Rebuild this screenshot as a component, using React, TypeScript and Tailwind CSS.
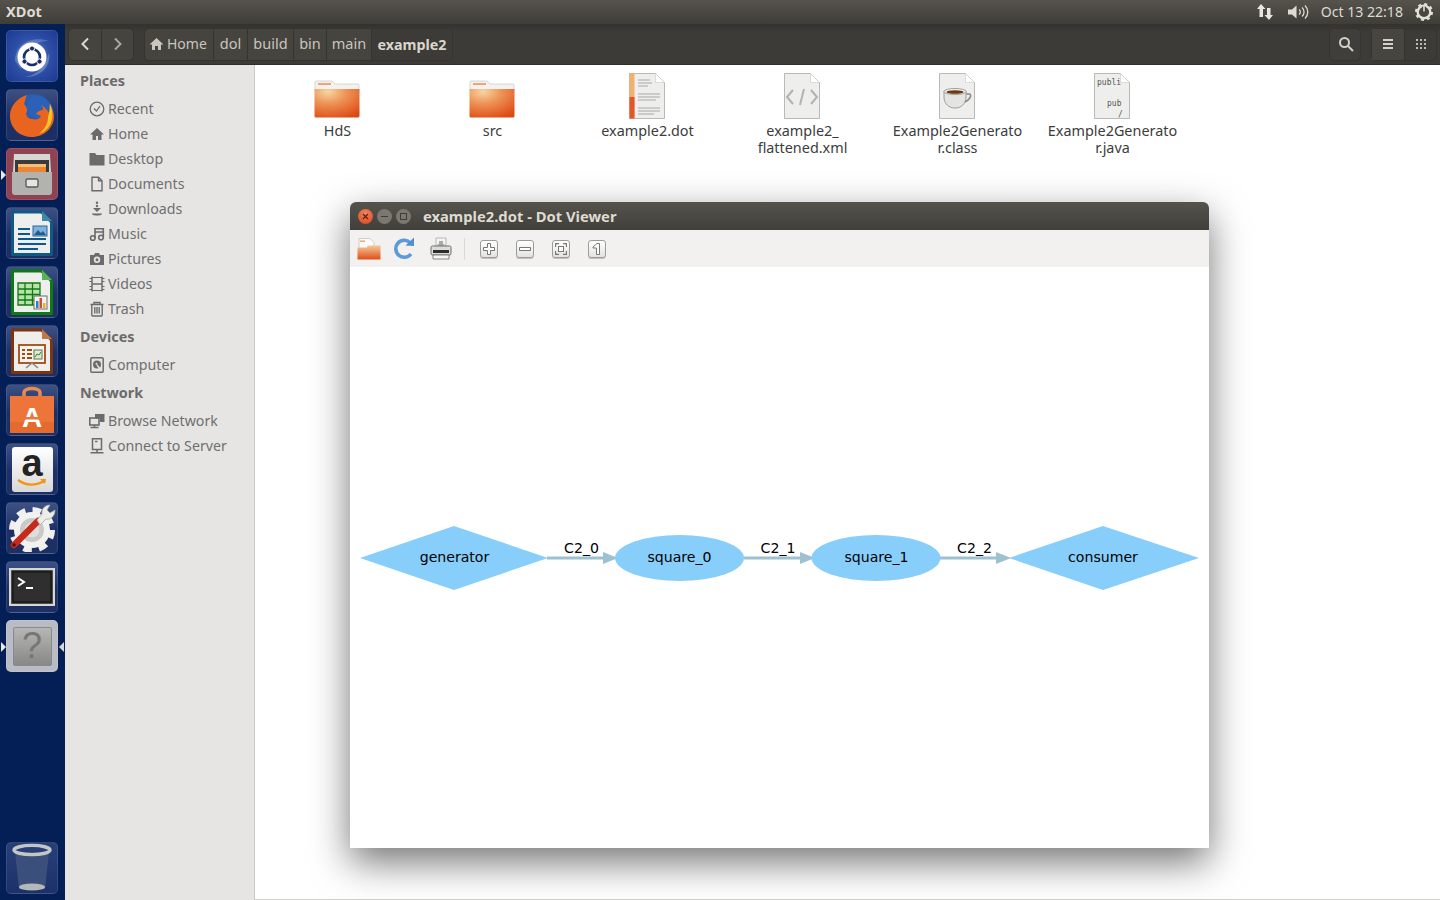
import type { ReactNode } from 'react';

const places = [
  { label: 'Recent', icon: 'recent' },
  { label: 'Home', icon: 'home' },
  { label: 'Desktop', icon: 'desktop' },
  { label: 'Documents', icon: 'documents' },
  { label: 'Downloads', icon: 'downloads' },
  { label: 'Music', icon: 'music' },
  { label: 'Pictures', icon: 'pictures' },
  { label: 'Videos', icon: 'videos' },
  { label: 'Trash', icon: 'trash' },
];

const crumbs = [
  { label: 'dol', width: 'w-[34px]' },
  { label: 'build', width: 'w-[46px]' },
  { label: 'bin', width: 'w-[33px]' },
  { label: 'main', width: 'w-[45px]' },
];

function SideIcon({ name }: { name: string }) {
  const c = '#6b6b6b';
  return (
    <svg width="16" height="16" viewBox="0 0 16 16" className="shrink-0">
      {name === 'recent' && (
        <g fill="none" stroke={c} strokeWidth="1.3">
          <circle cx="8" cy="8" r="6.8" />
          <path d="M5 7.5 7.5 10 11 5" />
        </g>
      )}
      {name === 'home' && <path d="M8 2 1 8.500H3.500V14H7v-4h2v4h3.500V8.500H15z" fill={c} />}
      {name === 'desktop' && <path d="M.5 2h5.500l1.500 2H15.500v10.500H.5z" fill={c} stroke="none" />}
      {name === 'documents' && <path d="M3 1.200h6.500l3.500 3.500v10.100H3zM9.500 1.200v3.500H13" fill="none" stroke={c} strokeWidth="1.400" />}
      {name === 'downloads' && (
        <g fill={c}>
          <circle cx="8" cy="1.800" r="1.200" />
          <circle cx="8" cy="5" r="1.200" />
          <path d="M4 7h8L8 11z" />
          <path d="M3 12.600h10c0 1-1 2-5 2s-5-1-5-2z" />
        </g>
      )}
      {name === 'music' && (
        <g fill="none" stroke={c} strokeWidth="1.600">
          <circle cx="3.800" cy="12" r="2.300" />
          <circle cx="12" cy="11.500" r="2.300" />
          <path d="M6 12V2.800h8.300v8.700M6 6h8.300" />
        </g>
      )}
      {name === 'pictures' && (
        <path
          fillRule="evenodd"
          d="M1 4H5l1-2h4l1 2h4v10H1zM8 5.500a3.200 3.200 0 1 0 0 6.400 3.200 3.200 0 0 0 0-6.400zM8 7.200a1.500 1.500 0 1 1 0 3 1.500 1.500 0 0 1 0-3z"
          fill={c}
        />
      )}
      {name === 'videos' && (
        <g fill="none" stroke={c} strokeWidth="1.500">
          <path d="M3 .5v15M13 .5v15M3 8h10" />
          <path d="M.5 2.500H3M.5 5.500H3M.5 10.500H3M.5 13.500H3M13 2.500h2.500M13 5.500h2.500M13 10.500h2.500M13 13.500h2.500" strokeWidth="1.100" />
          <path d="M3 1.500h10M3 14.500h10" strokeWidth="1.100" />
        </g>
      )}
      {name === 'trash' && (
        <g fill="none" stroke={c} strokeWidth="1.400">
          <path d="M1.500 3.500h13M5 3.500V1.500h6v2M2.800 3.500v10.500a1 1 0 0 0 1 1h8.400a1 1 0 0 0 1-1V3.500M5.800 6v6.500M8 6v6.500M10.200 6v6.500" />
        </g>
      )}
      {name === 'computer' && (
        <g>
          <rect x="1.800" y=".8" width="12.400" height="14.400" rx="1" fill="none" stroke={c} strokeWidth="1.500" />
          <circle cx="8" cy="7.500" r="4" fill={c} />
          <circle cx="7.500" cy="6.800" r="1" fill="#e6e5e4" />
          <path d="M8 8 11.500 12.500" stroke="#e6e5e4" strokeWidth="1.300" />
        </g>
      )}
      {name === 'network' && (
        <g>
          <path d="M6 1h9.500v8H11V5.500H6z" fill={c} />
          <rect x=".8" y="5" width="9.200" height="7" fill="none" stroke={c} strokeWidth="1.600" />
          <path d="M1.500 14.500h8M5.500 12v2.500" stroke={c} strokeWidth="1.500" />
        </g>
      )}
      {name === 'server' && (
        <g fill="none" stroke={c} strokeWidth="1.500">
          <path d="M3.500 .8h9v10.700h-9zM8 11.500v2.500M1.500 14.700h13" />
          <path d="M6 3.500h2.500" />
        </g>
      )}
    </svg>
  );
}

function SideRow({ icon, label }: { icon: string; label: string }) {
  return (
    <div className="flex h-[25px] items-center gap-[3px] pl-[24px] text-[14.2px] text-[#6f6f6f]">
      <SideIcon name={icon} />
      <span>{label}</span>
    </div>
  );
}

function SideHeading({ children }: { children: ReactNode }) {
  return <div className="flex h-[31px] items-center pl-[15px] text-[14.4px] font-bold text-[#6b6b6b]">{children}</div>;
}

function Tile({ children, bg, pipLeft, pipRight }: { children: ReactNode; bg: string; pipLeft?: boolean; pipRight?: boolean }) {
  return (
    <div className={`relative flex h-[52px] w-[52px] items-center justify-center overflow-visible rounded-[5px] border border-white/10 ${bg}`}>
      {pipLeft && <div className="absolute left-[-6px] top-[21px] h-0 w-0 border-y-[5px] border-l-[5px] border-y-transparent border-l-[#e8e8e8]" />}
      {pipRight && <div className="absolute right-[-7px] top-[21px] h-0 w-0 border-y-[5px] border-r-[5px] border-y-transparent border-r-[#d5d8de]" />}
      {children}
    </div>
  );
}

function Launcher() {
  const dark = 'bg-[linear-gradient(180deg,#3d5184_0%,#1c3068_55%,#1d2f63_100%)]';
  return (
    <div className="flex w-[65px] shrink-0 flex-col items-center gap-[7px] bg-[#031f56] pb-[6px] pr-[1px] pt-[6px]">
      <Tile bg="bg-[radial-gradient(circle_at_50%_50%,#7d94c8_0%,#2f50a8_50%,#1c3a90_100%)]">
        <svg width="50" height="50" viewBox="0 0 50 50">
          <path d="M8 30C8 14 24 4 42 10 30 10 16 16 14 38z" fill="#ffffff" opacity=".2" />
          <path d="M42 22c2 14-8 24-24 24 12-2 20-10 24-24z" fill="#ffffff" opacity=".25" />
          <circle cx="25" cy="26" r="14.500" fill="#ffffff" />
          <circle cx="25" cy="26" r="8" fill="none" stroke="#1b2d6b" strokeWidth="2.600" />
          <circle cx="25" cy="17.500" r="2.600" fill="#1b2d6b" stroke="#fff" />
          <circle cx="17.500" cy="30.500" r="2.600" fill="#1b2d6b" stroke="#fff" />
          <circle cx="32.500" cy="30.500" r="2.600" fill="#1b2d6b" stroke="#fff" />
        </svg>
      </Tile>
      <Tile bg={dark}>
        <svg width="50" height="50" viewBox="0 0 50 50">
          <circle cx="26" cy="25" r="21" fill="#2a5fb0" />
          <circle cx="31" cy="17" r="11" fill="#2b62b8" />
          <path d="M20 5C9 8 2 18 3 28c1 11 10 19 22 19 12 0 21-9 22-19 0-5-2-11-5-14 1 4 1 7 0 9-2-3-4-6-8-8 2 2 2 3 2 5-3 0-6 2-7 4l5 2c-1 3-5 4-9 3-3 0-5-2-6-5 2-4 1-7-2-10 1-2 1-5 3-9z" fill="#e8641f" />
          <path d="M43 14c4 8 3 19-3 25-2 2-5 4-8 5 6-5 9-11 9-17 1-3 2-9 2-13z" fill="#f6c324" />
        </svg>
      </Tile>
      <Tile bg="bg-[#8f4254]" pipLeft>
        <svg width="44" height="46" viewBox="0 0 44 46">
          <path d="M4 3h36l1 19H3z" fill="#d6d6d2" />
          <rect x="5" y="9" width="34" height="14" fill="#3a3a38" />
          <rect x="8" y="13" width="28" height="3" fill="#f4c079" />
          <rect x="8" y="16" width="28" height="5" fill="#ec8434" />
          <path d="M2 21h40v20a3 3 0 0 1-3 3H5a3 3 0 0 1-3-3z" fill="#b2b2ae" />
          <rect x="16" y="28" width="12" height="8" rx="1.500" fill="#e4e4e2" stroke="#5c5c58" strokeWidth="1.400" />
        </svg>
      </Tile>
      <Tile bg={dark}>
        <svg width="44" height="46" viewBox="0 0 44 46">
          <path d="M2.500 2h29l10 10v32.500h-39z" fill="#eeeeec" stroke="#0f5a84" strokeWidth="3" strokeLinejoin="round" />
          <path d="M32 1l10 10H32z" fill="#3d88a8" />
          <path d="M8 19h12M8 24h12M8 29h28M8 34h28M8 39h20" stroke="#0c5a8c" strokeWidth="2.200" />
          <rect x="23" y="16" width="14" height="10" fill="#7fb2dc" stroke="#2a6a98" />
          <path d="M24 25l4-5 3 3 2-2 3 4z" fill="#1f5f8f" />
        </svg>
      </Tile>
      <Tile bg={dark}>
        <svg width="44" height="46" viewBox="0 0 44 46">
          <path d="M2.500 2h29l10 10v32.500h-39z" fill="#eeeeec" stroke="#0f7a14" strokeWidth="3" strokeLinejoin="round" />
          <path d="M32 1l10 10H32z" fill="#5cb05c" />
          <path d="M8 14h22v22H8zM8 20h22M8 25.500h22M8 31h22M15 14v22M22.500 14v22" fill="#b8e2a8" stroke="#0f7a14" strokeWidth="1.300" />
          <rect x="24" y="27" width="13" height="13" fill="#f3f3f1" stroke="#6f6f6f" />
          <path d="M26 32h2.500v7H26z" fill="#2a7fd0" />
          <path d="M29.500 29h2.500v10h-2.500z" fill="#d84a2a" />
          <path d="M33 34h2.500v5H33z" fill="#eeb020" />
        </svg>
      </Tile>
      <Tile bg={dark}>
        <svg width="44" height="46" viewBox="0 0 44 46">
          <path d="M2.500 2h29l10 10v32.500h-39z" fill="#eeeeec" stroke="#7c350e" strokeWidth="3" strokeLinejoin="round" />
          <path d="M32 1l10 10H32z" fill="#bb7a50" />
          <rect x="9" y="17" width="26" height="18" fill="#f7f3ee" stroke="#a44a14" strokeWidth="1.800" />
          <path d="M12 22h3M12 26h3M12 30h3M17 22h5M17 26h5M17 30h5" stroke="#a44a14" strokeWidth="2" />
          <rect x="24" y="22" width="8" height="9" fill="#dfe8d4" stroke="#5a7a4a" />
          <path d="M25 29l2-3 2 1 2-3" stroke="#2a8a2a" fill="none" />
          <path d="M16 40l6-5 6 5" stroke="#8a8a86" fill="none" strokeWidth="1.600" />
        </svg>
      </Tile>
      <Tile bg={dark}>
        <svg width="46" height="48" viewBox="0 0 46 48">
          <path d="M15 14V7c0-6 16-6 16 0v7" fill="none" stroke="#e98a52" strokeWidth="3.500" />
          <path d="M1 10h44v37H1z" fill="#ed7539" />
          <path d="M1 36h44v11H1z" fill="#e56a2d" />
          <text x="23" y="41" textAnchor="middle" fontFamily="'Liberation Sans', sans-serif" fontWeight="700" fontSize="28" fill="#ffffff">A</text>
          <path d="M13 31h20v2.500H13z" fill="#ed7539" />
        </svg>
      </Tile>
      <Tile bg={dark}>
        <div className="flex h-[45px] w-[41px] flex-col items-center justify-start rounded-[3px] bg-[linear-gradient(180deg,#ffffff,#d8d8d8)]">
          <span className="mt-[-3px] font-['Liberation_Sans',sans-serif] text-[38px] font-bold leading-[38px] text-[#222222]">a</span>
          <svg width="32" height="8" viewBox="0 0 32 8" className="mt-[-3px]">
            <path d="M2 1c8 6 18 6 26 1" fill="none" stroke="#f2960f" strokeWidth="2.200" />
            <path d="M24 0h6l-1 5z" fill="#f2960f" />
          </svg>
        </div>
      </Tile>
      <Tile bg={dark}>
        <svg width="48" height="48" viewBox="0 0 48 48">
          <circle cx="24" cy="26" r="20" fill="none" stroke="#efefed" strokeWidth="6" strokeDasharray="8.500 7.200" />
          <circle cx="24" cy="26" r="18" fill="#f2f2f0" />
          <circle cx="24" cy="26" r="12" fill="#c9c9c6" />
          <circle cx="24" cy="26" r="7.500" fill="#dededb" />
          <path d="M6 41 30 17" stroke="#c9281c" strokeWidth="6.500" strokeLinecap="round" />
          <circle cx="6" cy="41" r="1.800" fill="#5c0e08" />
          <path d="M29 16l5-6c-1-5 3-9 8-9l-3 5 3 3 5-3c0 6-4 10-9 9l-6 6z" fill="#ecece9" stroke="#a8a8a4" strokeWidth=".8" />
        </svg>
      </Tile>
      <Tile bg={dark}>
        <svg width="46" height="38" viewBox="0 0 46 38">
          <rect x="1" y="1" width="44" height="36" fill="#2b2b2b" stroke="#d6d6d4" strokeWidth="2.400" />
          <rect x="4" y="4" width="38" height="30" fill="#2f2f2f" stroke="#101010" />
          <path d="M9 10l6 4-6 4" fill="none" stroke="#ffffff" strokeWidth="2" />
          <path d="M17 20h7" stroke="#ffffff" strokeWidth="2" />
        </svg>
      </Tile>
      <Tile bg="bg-[#b9bcc4]" pipLeft pipRight>
        <div className="flex h-[39px] w-[39px] items-center justify-center rounded-[2px] border border-[#8a8a88] bg-[linear-gradient(180deg,#b6b6b4,#888886)] font-['Liberation_Sans',sans-serif] text-[36px] leading-none text-[#777775]">
          ?
        </div>
      </Tile>
      <div className="mt-auto">
        <Tile bg="bg-[linear-gradient(180deg,#28407a_0%,#1b3168_100%)]">
          <svg width="40" height="50" viewBox="0 0 40 50">
            <path d="M3 9l4 37h26l4-37z" fill="#3b4f7c" />
            <ellipse cx="20" cy="44" rx="13" ry="3.600" fill="#b5b8ba" />
            <ellipse cx="20" cy="7" rx="18" ry="4.600" fill="none" stroke="#c4c6c6" strokeWidth="3.400" />
          </svg>
        </Tile>
      </div>
    </div>
  );
}

function FolderIcon() {
  return (
    <svg width="46" height="46" viewBox="0 0 46 46">
      <defs>
        <radialGradient id="folderFill" cx="0.3" cy="0.1" r="1">
          <stop offset="0" stopColor="#f5d6a4" />
          <stop offset="0.4" stopColor="#ee9558" />
          <stop offset="1" stopColor="#de4a15" />
        </radialGradient>
      </defs>
      <path d="M1 9a1 1 0 0 1 1-1h16l3 3h23a1 1 0 0 1 1 1v6H1z" fill="#f3f2f0" stroke="#c8c8c6" strokeWidth=".7" />
      <rect x="4" y="10" width="13" height="2" fill="#f0a478" />
      <path d="M.5 16h45v27a1.500 1.500 0 0 1-1.500 1.500H2A1.500 1.500 0 0 1 .5 43z" fill="url(#folderFill)" />
    </svg>
  );
}

function PageIcon({ children }: { children?: ReactNode }) {
  return (
    <svg width="46" height="46" viewBox="0 0 46 46">
      <path d="M5.500 .5h26l9 9v36h-35z" fill="#eeeeec" stroke="#b9b9b7" />
      <path d="M31.500 .5v9h9z" fill="#ffffff" stroke="#c8c8c6" strokeWidth=".6" />
      {children}
    </svg>
  );
}

function FileItem({ icon, lines }: { icon: ReactNode; lines: string[] }) {
  return (
    <div className="flex w-[155px] flex-col items-center">
      <div className="ml-[-2px] h-[46px] w-[46px]">{icon}</div>
      <div className="mt-[3px] text-center text-[14.4px] leading-[17px] text-[#3c3c3c]">
        {lines.map((line) => (
          <div key={line}>{line}</div>
        ))}
      </div>
    </div>
  );
}

function ToolButton({ children }: { children: ReactNode }) {
  return (
    <div className="flex h-[18px] w-[18px] items-center justify-center rounded-[3px] border border-[#9c9c9a] bg-[linear-gradient(180deg,#ffffff,#e2e2e0)] shadow-[0_1px_0_rgba(0,0,0,0.2)]">
      <svg width="12" height="12" viewBox="0 0 12 12" fill="#ffffff" stroke="#777775">
        {children}
      </svg>
    </div>
  );
}

function DotViewer() {
  return (
    <div className="absolute left-[350px] top-[202px] flex h-[646px] w-[859px] flex-col overflow-hidden rounded-t-[6px] shadow-[0_14px_38px_rgba(0,0,0,0.55)]">
      <div className="flex h-[28px] shrink-0 items-center bg-[linear-gradient(180deg,#55534c,#403f3a)] pl-[8px]">
        <div className="flex h-[15px] w-[15px] items-center justify-center rounded-full bg-[radial-gradient(circle_at_50%_30%,#f08560,#d9441c)] text-[#5e1c08]">
          <svg width="7" height="7" viewBox="0 0 7 7" stroke="currentColor" strokeWidth="1.100">
            <path d="M1 1l5 5M6 1 1 6" />
          </svg>
        </div>
        <div className="ml-[4px] flex h-[15px] w-[15px] items-center justify-center rounded-full bg-[#7a7870]">
          <div className="h-[1px] w-[7px] bg-[#3e3d38]" />
        </div>
        <div className="ml-[4px] flex h-[15px] w-[15px] items-center justify-center rounded-full bg-[#7a7870]">
          <div className="h-[7px] w-[7px] border border-[#3e3d38]" />
        </div>
        <div className="ml-[12px] mt-[1px] text-[14.75px] font-bold text-[#dfdbd2]">example2.dot - Dot Viewer</div>
      </div>
      <div className="flex h-[37px] shrink-0 items-center bg-[#f2f1f0] pl-[7px]">
        <svg width="24" height="24" viewBox="0 0 24 24">
          <defs>
            <linearGradient id="openFolder" x1="0" y1="0" x2="0" y2="1">
              <stop offset="0" stopColor="#f5c79a" />
              <stop offset="1" stopColor="#e04f17" />
            </linearGradient>
          </defs>
          <path d="M2 1.500h11l4 4v8H2z" fill="#fafafa" stroke="#c4c4c2" strokeWidth=".8" />
          <rect x="3" y="3.500" width="5" height="1.400" fill="#eda15f" />
          <path d="M.5 10.500h9l1.500-2h12.500v14h-23z" fill="url(#openFolder)" />
        </svg>
        <svg width="24" height="24" viewBox="0 0 24 24" className="ml-[11px]">
          <path d="M19 17a8.500 8.500 0 1 1-1-11.500" fill="none" stroke="#5b9bd8" strokeWidth="3.600" />
          <path d="M13.500 8.500 22 9V.5z" fill="#4f8fd0" />
        </svg>
        <svg width="24" height="24" viewBox="0 0 24 24" className="ml-[13px]">
          <path d="M7 1h10v8H7z" fill="#f4f4f2" stroke="#a8a8a6" strokeWidth=".8" />
          <path d="M10 4h4v3h2l-4 3-4-3h2z" fill="#a8a8a6" />
          <rect x="2" y="9" width="20" height="9" rx="1.500" fill="#dcdcda" stroke="#6c6c6a" />
          <rect x="4" y="13" width="16" height="3" fill="#2d2d2d" />
          <path d="M4 18h16v4H4z" fill="#f6f6f4" stroke="#6c6c6a" strokeWidth=".8" />
        </svg>
        <div className="ml-[11px] h-[22px] w-[1px] bg-[#d9d8d6]" />
        <div className="ml-[15px] flex items-center gap-[18px]">
          <ToolButton>
            <path d="M4.500 .5h3v4h4v3h-4v4h-3v-4h-4v-3h4z" />
          </ToolButton>
          <ToolButton>
            <path d="M.5 4.500h11v3H.5z" />
          </ToolButton>
          <ToolButton>
            <path d="M.5 4V.5H4M8 .5h3.500V4M11.500 8v3.500H8M4 11.500H.5V8" fill="none" strokeWidth="1.300" />
            <rect x="3.500" y="3.500" width="5" height="5" />
          </ToolButton>
          <ToolButton>
            <path d="M2 4 6 .5h2.500v11h-3V5H2z" />
          </ToolButton>
        </div>
      </div>
      <div className="min-h-0 flex-1 bg-white">
        <svg width="859" height="581" viewBox="350 267 859 581" className="block font-['DejaVu_Sans',sans-serif]">
          <g stroke="#9dc1d0" strokeWidth="3">
            <path d="M547 558H606M744 558H803M940 558H999" />
          </g>
          <g fill="#9dc1d0">
            <path d="M603 552 618 558 603 564z" />
            <path d="M800 552 815 558 800 564z" />
            <path d="M996 552 1011 558 996 564z" />
          </g>
          <g fill="#87cefa">
            <path d="M360 558 454 526 548 558 454 590z" />
            <ellipse cx="679.500" cy="558" rx="64.500" ry="23" />
            <ellipse cx="876" cy="558" rx="64.500" ry="23" />
            <path d="M1009 558 1103 526 1199 558 1103 590z" />
          </g>
          <g fontSize="14.100" fill="#000000" textAnchor="middle">
            <text x="454.500" y="562">generator</text>
            <text x="679.500" y="562">square_0</text>
            <text x="876.500" y="562">square_1</text>
            <text x="1103" y="562">consumer</text>
            <text x="581.500" y="553">C2_0</text>
            <text x="778" y="553">C2_1</text>
            <text x="974.500" y="553">C2_2</text>
          </g>
        </svg>
      </div>
    </div>
  );
}

export default function App() {
  return (
    <div className="relative flex h-[900px] w-[1440px] flex-col overflow-hidden bg-white font-['Noto_Sans','Open_Sans',sans-serif]">
      {/* Top panel */}
      <div className="flex h-[24px] shrink-0 items-center justify-between bg-[linear-gradient(180deg,#55534c,#3e3d38)] pl-[6px] pr-[7px] text-[#dfdbd2]">
        <span className="text-[14.6px] font-bold">XDot</span>
        <div className="flex items-center">
          <svg width="18" height="18" viewBox="0 0 18 18" fill="#e8e6e0">
            <path d="M5 1 9.500 6H7v8H3.500V6H1z" />
            <path d="M13 17 8.500 12H11V5h3.500v7H17z" />
          </svg>
          <svg width="22" height="18" viewBox="0 0 22 18" className="ml-[13px]" fill="none" stroke="#dfdbd2" strokeWidth="1.300">
            <path d="M1 6.500h4L9.500 2.500v13L5 11.500H1z" fill="#dfdbd2" stroke="none" />
            <path d="M12 6.500a3 3 0 0 1 0 5M15 4.500a6 6 0 0 1 0 9M18 2.500a9 9 0 0 1 0 13" />
          </svg>
          <span className="ml-[12px] text-[14.100px]">Oct 13 22:18</span>
          <svg width="18" height="18" viewBox="0 0 18 18" className="ml-[12px]">
            <circle cx="9" cy="9" r="6.300" fill="none" stroke="#e4e1d9" strokeWidth="2.400" />
            <circle cx="9" cy="9" r="8" fill="none" stroke="#e4e1d9" strokeWidth="2" strokeDasharray="3 3.280" />
            <path d="M9 3.500v5" stroke="#3e3d38" strokeWidth="3.400" />
            <path d="M9 3v5.500" stroke="#e4e1d9" strokeWidth="1.600" />
          </svg>
        </div>
      </div>

      <div className="flex min-h-0 flex-1">
        <Launcher />

        <div className="flex min-w-0 flex-1 flex-col">
          {/* Nautilus header */}
          <div className="flex h-[41px] shrink-0 items-center justify-between border-b border-[#2e2d29] bg-[linear-gradient(180deg,#33322e,#3c3b37_20%,#3c3b37)] pl-[3px] pr-[3px] text-[#c9c6bd]">
            <div className="flex items-center">
              <div className="flex h-[33px] w-[66px] rounded-[5px] border border-[#35342f] bg-[#45443f]">
                <div className="flex w-[33px] items-center justify-center border-r border-[#35342f] text-[#dcdad2]">
                  <svg width="10" height="14" viewBox="0 0 10 14" fill="none" stroke="currentColor" strokeWidth="2">
                    <path d="M8 1.500 2.500 7 8 12.500" />
                  </svg>
                </div>
                <div className="flex flex-1 items-center justify-center text-[#a9a69e]">
                  <svg width="10" height="14" viewBox="0 0 10 14" fill="none" stroke="currentColor" strokeWidth="2">
                    <path d="M2 1.500 7.500 7 2 12.500" />
                  </svg>
                </div>
              </div>
              <div className="ml-[10px] flex h-[33px] items-stretch rounded-[5px] border border-[#35342f] bg-[#45443f] text-[14.500px]">
                <div className="flex w-[69px] items-center gap-[3px] border-r border-[#35342f] pl-[4px]">
                  <svg width="15" height="14" viewBox="0 0 15 14" fill="#c9c6bd">
                    <path d="M7.500 1 .5 7.500h2.500V13h3V9h3v4h3V7.500h2.500z" />
                  </svg>
                  <span className="mt-[-1px] text-[14px]">Home</span>
                </div>
                {crumbs.map((crumb) => (
                  <div key={crumb.label} className={`flex items-center justify-center border-r border-[#35342f] ${crumb.width}`}>
                    {crumb.label}
                  </div>
                ))}
                <div className="flex w-[80px] items-center justify-center rounded-r-[5px] bg-[#3c3b37] pt-[1px] text-[14.300px] font-bold text-[#d9d6cd]">example2</div>
              </div>
            </div>
            <div className="flex items-center">
              <div className="flex h-[33px] w-[32px] items-center justify-center rounded-[5px] border border-[#35342f] bg-[#3f3e3a] text-[#d4d1c8]">
                <svg width="16" height="16" viewBox="0 0 16 16" fill="none" stroke="currentColor" strokeWidth="2" className="ml-[2px]">
                  <circle cx="6.500" cy="6.500" r="4.500" />
                  <path d="M10 10l5 5" />
                </svg>
              </div>
              <div className="ml-[10px] flex h-[33px] w-[66px] rounded-[5px] border border-[#35342f]">
                <div className="flex w-[33px] items-center justify-center border-r border-[#35342f] bg-[#46453f] text-[#d4d1c8]">
                  <svg width="12" height="10" viewBox="0 0 12 10" fill="currentColor">
                    <path d="M1 0h10v2H1zM1 4h10v2H1zM1 8h10v2H1z" />
                  </svg>
                </div>
                <div className="flex flex-1 items-center justify-center text-[#bdbab1]">
                  <svg width="11" height="11" viewBox="0 0 11 11" fill="currentColor" className="ml-[2px]">
                    <path d="M0 0h2v2H0zM4 0h2v2H4zM8 0h2v2H8zM0 4h2v2H0zM4 4h2v2H4zM8 4h2v2H8zM0 8h2v2H0zM4 8h2v2H4zM8 8h2v2H8z" />
                  </svg>
                </div>
              </div>
            </div>
          </div>

          <div className="flex min-h-0 flex-1">
            {/* Sidebar */}
            <div className="w-[190px] shrink-0 border-r border-[#c9c8c6] bg-[#e6e5e4]">
              <SideHeading>Places</SideHeading>
              {places.map((place) => (
                <SideRow key={place.label} icon={place.icon} label={place.label} />
              ))}
              <SideHeading>Devices</SideHeading>
              <SideRow icon="computer" label="Computer" />
              <SideHeading>Network</SideHeading>
              <SideRow icon="network" label="Browse Network" />
              <SideRow icon="server" label="Connect to Server" />
            </div>

            {/* Files */}
            <div className="flex min-w-0 flex-1 items-start border-b border-[#d0d0ce] bg-white pl-[5px] pt-[8px]">
              <FileItem icon={<FolderIcon />} lines={['HdS']} />
              <FileItem icon={<FolderIcon />} lines={['src']} />
              <FileItem
                icon={
                  <PageIcon>
                    <rect x="5.500" y=".5" width="5" height="45" fill="#f0b070" />
                    <rect x="5.500" y="24" width="5" height="21.500" fill="#e2562a" />
                    <path d="M14 7h12M14 10h14M14 13h10M14 21h22M14 24h22M14 27h18M14 35h22M14 38h22M14 41h16" stroke="#a8a8a6" strokeWidth="1" />
                  </PageIcon>
                }
                lines={['example2.dot']}
              />
              <FileItem
                icon={
                  <PageIcon>
                    <path d="M14 17 8 24l6 7M32 17l6 7-6 7M25 16l-4 16" fill="none" stroke="#b2b2b0" strokeWidth="2" />
                  </PageIcon>
                }
                lines={['example2_', 'flattened.xml']}
              />
              <FileItem
                icon={
                  <PageIcon>
                    <path d="M10 18h22v6c0 7-5 11-11 11s-11-4-11-11z" fill="#e4e4e2" stroke="#8c8c8a" strokeWidth=".8" />
                    <ellipse cx="21" cy="18.500" rx="11" ry="3" fill="#f2f2f0" stroke="#8c8c8a" strokeWidth=".8" />
                    <ellipse cx="21" cy="19" rx="8.500" ry="1.800" fill="#6b3a14" />
                    <path d="M32 21h3c3 0 2 5-4 8" fill="none" stroke="#8c8c8a" strokeWidth="1.600" />
                  </PageIcon>
                }
                lines={['Example2Generato', 'r.class']}
              />
              <FileItem
                icon={
                  <PageIcon>
                    <g fontFamily="'DejaVu Sans Mono', monospace" fontSize="8" fill="#555753">
                      <text x="8" y="12">publi</text>
                      <text x="18" y="33">pub</text>
                      <text x="29" y="44">/</text>
                    </g>
                  </PageIcon>
                }
                lines={['Example2Generato', 'r.java']}
              />
            </div>
          </div>
        </div>
      </div>

      <DotViewer />
    </div>
  );
}
